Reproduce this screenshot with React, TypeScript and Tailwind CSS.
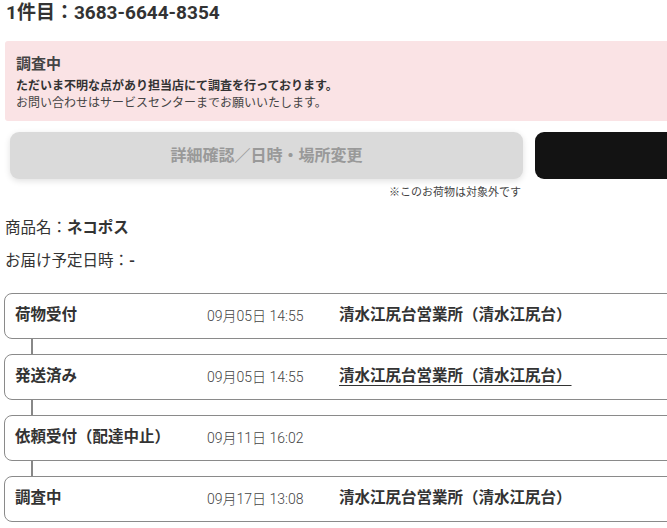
const rows = [
  { label: '荷物受付', date: '09月05日 14:55', place: '清水江尻台営業所（清水江尻台）', link: false },
  { label: '発送済み', date: '09月05日 14:55', place: '清水江尻台営業所（清水江尻台）', link: true },
  { label: '依頼受付（配達中止）', date: '09月11日 16:02', place: '', link: false },
  { label: '調査中', date: '09月17日 13:08', place: '清水江尻台営業所（清水江尻台）', link: false },
];

export default function App() {
  return (
    <div
      className="w-full h-[528px] overflow-hidden bg-white text-[#333]"
      style={{ fontFamily: 'Roboto, "Noto Sans CJK JP", sans-serif' }}
    >
      <div className="w-[1060px] pl-[5px]">
        <h2 className="text-[19px] font-bold leading-none pl-[1px] pt-[3px] text-[#333]">
          1件目：3683-6644-8354
        </h2>

        <div className="mt-[19px] rounded-[3px] bg-[#fae3e5] px-[11px] pt-[12px] pb-[9px]">
          <p className="text-[15px] font-bold leading-[22px] text-[#444] mb-[3px]">調査中</p>
          <p className="text-[12px] font-bold leading-[17px] text-[#333]">
            ただいま不明な点があり担当店にて調査を行っております。
          </p>
          <p className="text-[12px] leading-[17px] text-[#444]">
            お問い合わせはサービスセンターまでお願いいたします。
          </p>
        </div>

        <div className="flex gap-[12px] mt-[11px] pl-[5px]">
          <div className="w-[513px] shrink-0">
            <button className="w-full h-[47px] rounded-[9px] bg-[#dadada] text-[16px] font-bold text-[#999] shadow-[0_2px_6px_rgba(0,0,0,0.12)]">
              詳細確認／日時・場所変更
            </button>
            <p className="text-right text-[11px] leading-[14px] text-[#444] mt-[7px] pr-[2px]">※このお荷物は対象外です</p>
          </div>
          <div className="w-[513px] h-[47px] rounded-[9px] bg-[#131313]" />
        </div>

        <div className="mt-[18px] text-[15.5px] leading-[20px]">
          <p>
            商品名：<span className="font-bold">ネコポス</span>
          </p>
          <p className="mt-[13px]">
            お届け予定日時：<span className="font-bold">-</span>
          </p>
        </div>

        <ul className="mt-[22px] pr-[60px]">
          {rows.map((r, i) => (
            <li key={i}>
              {i > 0 && <div className="ml-[26px] w-[2px] h-[15px] bg-[#888]" />}
              <div className="h-[46px] -ml-[1px] flex items-center rounded-[8px] border border-[#8a8a8a] px-[10px]">
                <span className="w-[192px] text-[15.5px] font-bold text-[#333]">{r.label}</span>
                <span className="w-[132px] text-[14px] font-light text-[#444]">{r.date}</span>
                {r.place && (
                  <span
                    className={`text-[15.5px] font-bold text-[#333] ${r.link ? 'underline underline-offset-[4px]' : ''}`}
                  >
                    {r.place}
                  </span>
                )}
              </div>
            </li>
          ))}
        </ul>
      </div>
    </div>
  );
}
